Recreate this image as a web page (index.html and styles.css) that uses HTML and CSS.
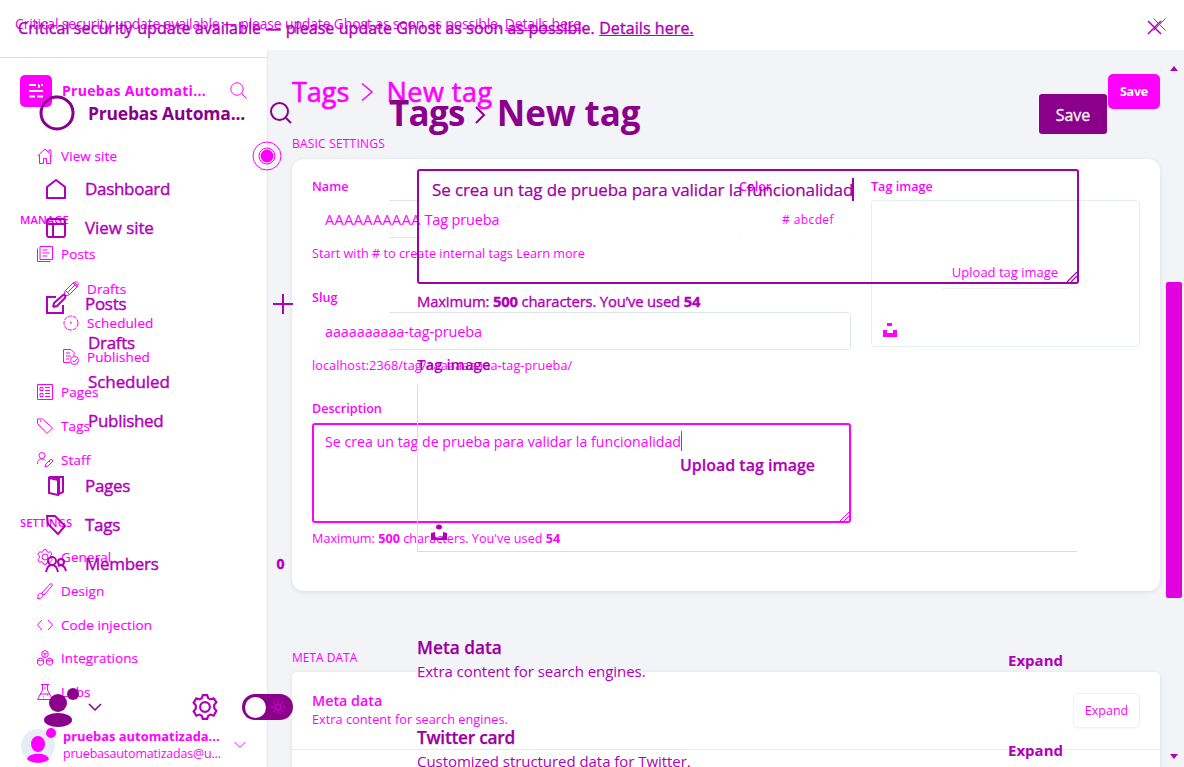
FILE: index.html
```html
<!DOCTYPE html>
<html lang="en">
<head>
<meta charset="utf-8">
<title>New tag - Ghost</title>
<link rel="stylesheet" href="styles.css">
</head>
<body>
<div class="stage">
<section class="layer small">
  <header class="banner"><p><span class="alert">Critical security update available — please update Ghost as soon as possible. <u>Details here</u>.</span></p>
    <svg class="close" width="13" height="13" viewBox="0 0 13 13"><path d="M.5.5l12 12M12.5.5l-12 12"/></svg></header>
  <div class="body">
    <nav class="sidebar">
      <div class="brand"><span class="logo"><svg width="16" height="16" viewBox="0 0 16 16"><path d="M1 2h7M10 2h1M13 2h2M1 8h14M1 13.500h6M9 13.500h6M11 2v3" stroke-width="2"/></svg></span><b class="sitename">Pruebas Automati...</b>
        <svg class="find" width="17" height="17" viewBox="0 0 17 17"><circle cx="7" cy="7" r="6.2"/><path d="M11.5 11.5l5 5"/></svg></div>
      <a class="item view"><svg viewBox="0 0 16 16"><path d="M.5 8L8 1l7.500 7M2.500 7v8.500h4v-5h3v5h4V7M12 4V2h2v4"/></svg><span>View site</span><svg class="radar" width="30" height="30" viewBox="0 0 30 30"><circle cx="15" cy="15" r="14"/><circle cx="15" cy="15" r="8"/><circle class="solid" cx="15" cy="15" r="6.500"/></svg></a>
      <div class="group"><span class="manage">MANAGE</span></div>
      <a class="item posts-item"><svg viewBox="0 0 16 16"><path d="M3 .5h12.500v13H3zM.500 2.500v13h13M5.500 4h5M5.500 7h7M5.500 10h5"/></svg><span>Posts</span></a>
      <a class="item sub gap1"><svg viewBox="0 0 16 16"><path d="M1 15l1-5 9-9 4 4-9 9-5 1M10 2l4 4M3 10l3 3M4 12l8-8M12 1c2-1 4 1 3 3"/></svg><span>Drafts</span></a>
      <a class="item sub"><svg viewBox="0 0 16 16"><circle cx="8" cy="8" r="7" stroke-dasharray="4 1"/><path d="M7 7h1v2"/></svg><span>Scheduled</span></a>
      <a class="item sub short"><svg viewBox="0 0 16 16"><path d="M7 13.500H.500V.500H8l3 3V7M3 4h4M3 7h5M3 10h3"/><circle cx="11.500" cy="11.500" r="4"/><path d="M9.500 12l1.500 1 3-3"/></svg><span>Published</span></a>
      <a class="item gap2"><svg viewBox="0 0 16 16"><path d="M.500.500h15v15H.500zM3 3.500h3v3H3zM3 9.500h3v3H3zM8 3.500h5M8 6.500h5M8 9.500h5M8 12.500h5"/></svg><span>Pages</span></a>
      <a class="item"><svg viewBox="0 0 16 16"><path d="M.500 1h5l10 9-5.500 5.500-9.500-10zM3 3h1v1"/></svg><span>Tags</span></a>
      <a class="item short"><svg viewBox="0 0 16 16"><circle cx="5" cy="3.500" r="3"/><path d="M.500 12c0-4 2-5 4.500-5 1.500 0 2.500.500 3.500 1.500M8 15l1-3 5-5 2 2-5 5zM12 9l1 1"/></svg><span>Staff</span></a>
      <div class="group"><span class="settings">SETTINGS</span></div>
      <a class="item"><svg viewBox="0 0 24 24"><use href="#gear"/></svg><span>General</span></a>
      <a class="item"><svg viewBox="0 0 16 16"><path d="M.500 15.500c1-2-.500-3 2-5 2-1 4 1 3 3-1 2-3 2-5 2M5 10l8-9c2-1 3 1 2 2l-8 9M4 10l3 2"/></svg><span>Design</span></a>
      <a class="item short"><svg viewBox="0 0 16 16"><path d="M5 3L.500 8 5 13M11 3l4.500 5-4.500 5"/></svg><span class="code">Code injection</span></a>
      <a class="item"><svg viewBox="0 0 16 16"><path d="M8 .500l3 1.500v4L8 8 5 6V2zM3.500 8l3 1.500v4l-3 2-3-2v-4zM12.500 8l3 1.500v4l-3 2-3-2v-4zM6 3l2 1 2-1M8 4v4M1 10l2.500 1L6 10M10 10l2.500 1 2.500-1"/></svg><span>Integrations</span></a>
      <a class="item short"><svg viewBox="0 0 16 16"><path d="M4 .500h8M5.500.500V6L.500 15.500h15L10.500 6V.500M3 10h10M7 4h2M6 13h1M10 11h1"/></svg><span>Labs</span></a>
      <div class="user"><svg width="36" height="36" viewBox="0 0 36 36"><circle class="pale" cx="17" cy="19" r="17"/><ellipse class="solid" cx="17" cy="17" rx="7" ry="8"/><path class="solid" d="M6 32c2-7 20-7 22 0-4 5-18 5-22 0"/><circle class="solid" cx="30" cy="6" r="5"/></svg>
        <div class="who"><b>pruebas automatizada...</b><span>pruebasautomatizadas@u...</span></div><svg class="chev" width="12" height="8" viewBox="0 0 12 8"><path d="M.500 1L6 6.500 11.500 1"/></svg></div>
    </nav>
    <main class="page">
      <div class="title"><h1><span>Tags</span><svg width="12" height="20" viewBox="0 0 12 20"><path d="M1 1.500l10 8.500-10 8.500" stroke-width="1.500"/></svg><span class="newtag-small">New tag</span></h1><button class="save">Save</button></div>
      <h2 class="section basic">BASIC SETTINGS</h2>
      <div class="card form">
        <div class="fields">
          <div class="row"><div class="name"><label>Name</label><div class="input partial"><span class="caps">AAAAAAAAAA</span> Tag prueba</div></div>
            <div class="color"><label>Color</label><div class="input corners"># abcdef</div></div></div>
          <p class="hint">Start with # to create internal tags Learn more</p>
          <label class="slug">Slug</label><div class="input sluginput">aaaaaaaaaa-tag-prueba</div>
          <p class="hint url">localhost:2368/tag/aaaaaaaaaa-tag-prueba/</p>
          <label class="desc">Description</label>
          <div class="area"><span class="entry">Se crea un tag de prueba para validar la funcionalidad</span><i></i><svg class="grip" width="9" height="9" viewBox="0 0 9 9"><path d="M0 9l9-9M4 9l5-5"/></svg></div>
          <p class="hint">Maximum: <b>500</b> characters. You've used <strong>54</strong></p>
        </div>
        <div class="image"><label>Tag image</label><div class="drop"><span class="upload">Upload tag image</span><svg width="14" height="15" viewBox="0 0 14 15"><path class="solid" d="M4 1h5v3H4zM0 8h4v3h6V8h4v7H0z"/></svg></div></div>
      </div>
      <h2 class="section meta">META DATA</h2>
      <div class="card metas"><div class="metarow"><div><h3>Meta data</h3><p>Extra content for search engines.</p></div><button class="expand">Expand</button></div></div>
    </main>
  </div>
</section>

<section class="layer large">
  <header class="banner"><p><span class="alert">Critical security update available — please update Ghost as soon as possible. <u>Details here.</u></span></p>
    <svg class="close" width="15" height="15" viewBox="0 0 15 15"><path d="M1 1l13 13M14 1L1 14"/></svg></header>
  <div class="body">
    <nav class="sidebar">
      <div class="brand"><svg width="36" height="36" viewBox="0 0 36 36"><circle cx="18" cy="18" r="16" stroke-width="3"/><path d="M9 4C17-1 29 3 33 11c3 8 0 16-6 20"/></svg><b>Pruebas Automa...</b><svg class="find" width="22" height="22" viewBox="0 0 22 22"><circle cx="9.500" cy="9.500" r="8.500"/><path d="M16 16l5 5"/></svg></div>
      <a class="item dash"><svg viewBox="0 0 20 20"><path d="M1 8l9-7 9 7v11H1z"/></svg><span>Dashboard</span></a>
      <a class="item"><svg viewBox="0 0 20 20"><rect x="1" y="1" width="18" height="18" rx="2"/><path d="M1 6h18M7 6v13"/></svg><span class="vs">View site</span></a>
      <a class="item posts"><svg viewBox="0 0 20 20"><path d="M10 3H1v16h16v-8M7 13l1-4 9-8c2-1 3 1 2 3l-8 8-4 1"/></svg><span>Posts</span><svg class="plus" viewBox="0 0 20 20"><path d="M10 0v20M0 10h20"/></svg></a>
      <a class="item sub"><span>Drafts</span></a>
      <a class="item sub"><span class="sch">Scheduled</span></a>
      <a class="item sub"><span>Published</span></a>
      <a class="item pages"><svg viewBox="0 0 20 20"><path d="M3 2l9 2v15l-9-2zM3 2l1-1h13v15l-4 2M8 1l5 2v15"/></svg><span>Pages</span></a>
      <a class="item"><svg viewBox="0 0 20 20"><path d="M1 1h8l10 10-7 8L2 9zM5 5l1 1"/></svg><span>Tags</span></a>
      <a class="item"><svg viewBox="0 0 20 20"><circle cx="6" cy="7" r="4"/><circle cx="15" cy="8" r="3"/><path d="M0 18c1-5 3-7 6-7s5 2 6 7M12 12c4-2 7 0 8 5"/></svg><span>Members</span><b class="count">0</b></a>
      <div class="tools"><svg class="person" width="40" height="40" viewBox="0 0 40 40"><circle class="solid" cx="16" cy="16" r="9"/><ellipse class="solid" cx="16" cy="33" rx="14" ry="7"/><circle class="solid" cx="31" cy="7" r="6"/></svg><svg class="chev" width="14" height="9" viewBox="0 0 14 9"><path d="M1 1l6 6 6-6"/></svg>
        <svg class="cog" width="26" height="26" viewBox="0 0 24 24"><g id="gear"><circle cx="12" cy="12" r="4.500"/><path d="M10 1h4l1 3 2 1 3-1 2.500 3.500-2 2.500v3l2 2.500L20 20l-3-1-2 1-1 3h-4l-1-3-2-1-3 1-2.500-4 2-2.500v-3L1.500 8 4 4l3 1 2-1z"/></g></svg>
        <span class="toggle"><i></i><svg width="14" height="14" viewBox="0 0 14 14"><circle cx="7" cy="7" r="3"/><path d="M7 0v14M0 7h14M2 2l10 10M12 2L2 12" stroke-dasharray="2 10 2 10"/></svg></span></div>
    </nav>
    <main class="page">
      <div class="title"><h1><span>Tags</span><svg width="10" height="18" viewBox="0 0 10 18"><path d="M1 1l8 8-8 8"/></svg><span class="newtag">New tag</span></h1><button class="save">Save</button></div>
      <div class="fields">
        <div class="area"><span class="entry">Se crea un tag de prueba para validar la funcionalidad</span><i></i><svg class="grip" width="10" height="10" viewBox="0 0 10 10"><path d="M0 10L10 0M4 10l6-6"/></svg></div>
        <p class="max">Maximum: <b>500</b> characters. You’ve used <b>54</b></p>
        <label><span>Tag image</span></label>
        <div class="drop"><span>Upload tag image</span><svg width="16" height="18" viewBox="0 0 16 18"><ellipse class="solid" cx="8" cy="3" rx="3" ry="2.500"/><path class="solid" d="M0 9l4-1v3q0 3 4 3t4-3V8l4 1v7H0z"/></svg></div>
        <div class="metarow"><div><h3>Meta data</h3><p class="extra">Extra content for search engines.</p></div><b>Expand</b></div>
        <div class="metarow"><div><h3 class="tw">Twitter card</h3><p class="custom">Customized structured data for Twitter.</p></div><b>Expand</b></div>
      </div>
    </main>
    <aside class="scroll"><span class="up"></span><span class="thumb"></span><span class="down"></span></aside>
  </div>
</section>
</div>
</body>
</html>
```

FILE: styles.css
```css
* { box-sizing: border-box; margin: 0; padding: 0; }
body { width: 1184px; height: 767px; overflow: hidden; background: #fff; font-family: "Open Sans", sans-serif; }
.stage { display: grid; height: 767px; overflow: hidden; }
.layer { grid-area: 1 / 1; width: 1184px; height: 767px; overflow: hidden; white-space: nowrap; }
.small { color: #f0f; background: #fff; font-size: 13px; }
.large { z-index: 2; color: #b000b8; font-size: 17px; }
svg { flex: none; fill: none; stroke: currentColor; stroke-width: 1; overflow: visible; }
.solid { fill: currentColor; stroke: none; }
h1, h2, h3, button { font-family: inherit; font-weight: normal; }
h1, .brand, .item, .user, .tools, .title, .body, .metarow { display: flex; align-items: center; }
.body { align-items: stretch; height: 717px; }
.banner { display: flex; justify-content: space-between; height: 50px; }

/* Compact layout */
.small .banner { padding: 14px 18px 0 15px; line-height: 20px; font-size: 14px; color: #e800f0; }
.small .alert { letter-spacing: -.17px; }
.small .close { margin-top: 4px; }
.small .sidebar { position: relative; z-index: 1; width: 268px; padding-top: 7px; border-right: 1px solid #e4e7eb; background: #fff; }
.small .brand { height: 66px; border-top: 1px solid #dcdfe1; padding-left: 20px; }
.logo { display: grid; place-items: center; width: 32px; height: 32px; border-radius: 5px; background: #f0f; color: #fff; }
.small .brand b { margin-left: 10px; width: 168px; font-size: 14px; letter-spacing: .28px; }
.small .item { height: 34px; padding-left: 37px; font-size: 13.500px; letter-spacing: .1px; -webkit-text-stroke: .15px currentColor; }
.small .item > svg:first-child { width: 16px; height: 16px; margin-right: 8px; }
.small .item > svg[viewBox="0 0 24 24"] { stroke-width: 1.500; }
.small .item.view { margin: 16px 0 30px; }
.small .radar { margin-left: auto; margin-right: -15px; }
.small .group { height: 34px; line-height: 34px; padding-left: 20px; font-size: 11.250px; font-weight: 600; letter-spacing: .05px; }
.small .sub { padding-left: 63px; }
.gap1 { margin-top: 1px; }
.gap2 { margin-top: 2px; }
.small .short { height: 33px; }
.small .short + .group { margin-top: 30px; }
.user { margin-top: 15px; height: 44px; padding-left: 21px; }
.pale { fill: #e6eef5; stroke: none; }
.who { margin-left: 6px; width: 171px; font-size: 12.500px; line-height: 18px; }
.who b, .who span { display: block; }
.who b { font-size: 12.900px; }
.who span { letter-spacing: -.2px; }
.small .page { width: 898px; padding-left: 24px; background: #f2f4f8; flex: 1; }
.small .title { height: 67px; padding-top: 17px; width: 868px; justify-content: space-between; align-items: flex-start; }
.small h1 { font-size: 27px; line-height: 50px; height: 50px; -webkit-text-stroke: .6px currentColor; }
.small h1 svg { margin: 0 13px 0 12px; }
.newtag-small { letter-spacing: .5px; }
.save { border: 0; color: #fff; font-weight: 600; }
.small .save { width: 52px; height: 35px; margin-top: 7px; border-radius: 5px; background: #f0f; font-size: 12.500px; font-weight: 700; letter-spacing: -.2px; line-height: 36px; }
.section { font-size: 12px; line-height: 18px; }
.small .basic { margin-top: 18px; letter-spacing: .2px; }
.card { width: 868px; background: #fff; border-radius: 12px; box-shadow: 0 1px 4px #0000001a; }
.form { display: flex; gap: 20px; height: 432px; margin-top: 6px; padding: 18px 20px; }
.small .fields { width: 539px; }
.small label { display: block; font-weight: 600; font-size: 12.600px; line-height: 20px; }
.row { display: flex; gap: 7px; }
.name { width: 420px; }
.color { width: 112px; }
.input { height: 38px; margin-top: 3px; padding-left: 13px; line-height: 39px; font-size: 14.500px; border-radius: 4px; }
.caps { letter-spacing: .42px; }
.partial { letter-spacing: -.15px; background: linear-gradient(#dce6ec, #dce6ec) 77px 0 / 28px 1px no-repeat, linear-gradient(#dce6ec, #dce6ec) 77px 100% / 28px 1px no-repeat; }
.corners { font-size: 12px; padding-left: 43px; letter-spacing: .4px; background: linear-gradient(#eceff2, #eceff2) 0 1px / 2px 1px no-repeat, linear-gradient(#eceff2, #eceff2) 100% 1px / 2px 1px no-repeat, linear-gradient(#eceff2, #eceff2) 0 36px / 2px 1px no-repeat, linear-gradient(#eceff2, #eceff2) 100% 36px / 2px 1px no-repeat; }
.sluginput { margin-top: 4px; line-height: 39px; letter-spacing: -.13px; background: linear-gradient(#dce6ec, #dce6ec) 77px 0 / 500px 1px no-repeat, linear-gradient(#dce6ec, #dce6ec) 77px 100% / 500px 1px no-repeat; border-right: 1px solid #dce6ec; }
.hint { height: 20px; line-height: 18px; margin-top: 6px; font-size: 12.680px; }
.url { letter-spacing: .07px; }
.slug { margin-top: 24px; }
.desc { margin-top: 23px; }
.area { display: flex; align-items: flex-start; position: relative; border: 2px solid; border-radius: 3px; }
.small .area { height: 100px; margin-top: 4px; padding: 6px 11px; font-size: 14.200px; line-height: 21px; }
.area i { width: 1px; height: 20px; background: currentColor; }
.grip { position: absolute; right: 0; bottom: 0; }
.image { width: 269px; }
.small .drop { display: flex; flex-direction: column; align-items: flex-start; height: 147px; margin-top: 3px; padding: 54px 12px 9px 11px; border: 1px solid #e6eef3; border-radius: 4px; }
.upload { width: 130px; height: 34px; margin-left: 57px; line-height: 34px; text-align: center; border-bottom: 1px solid #eef1f4; border-radius: 4px; }
.small .drop svg { margin-top: auto; }
.small .meta { margin-top: 58px; letter-spacing: 0; }
.metas { height: 120px; margin-top: 5px; border-radius: 5px; }
.small .metarow { height: 78px; padding: 0 20px; justify-content: space-between; border-bottom: 1px solid #e5edf2; }
.small h3 { margin-top: -1px; font-size: 14.300px; font-weight: 600; line-height: 19px; }
.small .metarow p { font-size: 12.780px; line-height: 19px; }
.expand { width: 67px; height: 35px; margin-top: -1px; border: 1px solid #eef1f4; border-radius: 5px; background: #fff; color: #f0f; font-size: 12.500px; box-shadow: 0 1px 2px #00000008; }

/* Enlarged layout */
.large .banner { padding: 18px 22px 0 18px; line-height: 20px; font-size: 16px; letter-spacing: .08px; -webkit-text-stroke: .4px currentColor; }
.large .close { margin-top: 2px; stroke-width: 1.500; }
.large svg { stroke-width: 2; }
.large .sidebar { width: 389px; padding-top: 43px; }
.large .brand { height: 40px; padding-left: 39px; color: #8b008b; }
.large .brand b { width: 182px; margin-left: 13px; font-size: 17.500px; letter-spacing: -.2px; }
.large .item { height: 39px; padding-left: 46px; font-size: 17px; letter-spacing: -.3px; -webkit-text-stroke: .4px currentColor; }
.large .item > svg:first-child { width: 20px; height: 20px; margin-right: 19px; }
.large .item.dash { margin-top: 36px; }
.large .item.posts { margin-top: 37px; }
.large .item.sub { padding-left: 88px; }
.large .item .vs, .large .item .sch { letter-spacing: -.08px; }
.large .item.pages { margin-top: 26px; }
.large .plus { width: 20px; height: 20px; margin-left: 147px; }
.count { margin-left: 118px; font-size: 14px; }
.tools { height: 40px; margin-top: 104px; padding-left: 42px; color: #8b008b; }
.large .tools .chev { margin-left: 6px; stroke-width: 1.500; }
.tools .cog { margin-left: 90px; color: #b000b8; }
.toggle { display: flex; align-items: center; justify-content: space-between; width: 51px; height: 26px; margin-left: 24px; padding: 2px 8px 2px 3px; border-radius: 13px; background: #8b008b; color: #c800c8; }
.toggle i { width: 21px; height: 21px; border-radius: 50%; background: #fff; }
.large .toggle svg { stroke-width: 1.500; }
.large .page { width: 777px; padding-top: 39px; }
.large .title { width: 718px; height: 50px; justify-content: space-between; color: #8b008b; }
.large h1 { margin-top: -2px; font-size: 35px; font-weight: 700; line-height: 48px; letter-spacing: -.7px; }
.large .newtag { letter-spacing: -.1px; }
.large h1 svg { margin: 4px 12px 0 10px; }
.large .save { width: 68px; height: 40px; border-radius: 3px; background: #8b008b; font-size: 16px; font-weight: 400; line-height: 42px; color: #eee; -webkit-text-stroke: .4px currentColor; }
.large .fields { width: 662px; margin: 30px 0 0 28px; }
.large .area { height: 115px; padding: 7px 13px; font-size: 17px; line-height: 24px; letter-spacing: -.1px; color: #a000a8; -webkit-text-stroke: .25px currentColor; }
.large .area i { height: 23px; width: 2px; margin-left: -1px; }
.large .grip { stroke-width: 1.200; }
.large .max { height: 24px; margin-top: 5px; line-height: 24px; font-size: 14.800px; letter-spacing: -.15px; -webkit-text-stroke: .35px currentColor; }
.large label { display: block; margin-top: 40px; height: 22px; line-height: 22px; font-size: 15px; font-weight: 600; }
.large .drop { display: flex; flex-direction: column; align-items: center; width: 660px; height: 167px; margin-top: 10px; padding: 68px 0 9px; border-left: 1px solid #ddd; border-bottom: 1px solid #ddd; font-size: 16px; font-weight: 600; line-height: 24px; -webkit-text-stroke: .2px currentColor; }
.large .drop svg { align-self: flex-start; margin: auto 0 0 13px; }
.large .metarow { justify-content: space-between; width: 646px; height: 90px; }
.large .drop + .metarow { margin-top: 62px; }
.large .metarow b { margin-top: 2px; font-size: 15px; }
.large h3 { font-size: 17.300px; font-weight: 600; line-height: 24px; color: #9a00a2; -webkit-text-stroke: .25px currentColor; }
.large .tw { letter-spacing: -.25px; }
.large .metarow p { margin-top: -1px; font-size: 15px; line-height: 24px; letter-spacing: -.05px; }
.scroll { display: flex; flex-direction: column; align-items: center; width: 18px; height: 717px; padding: 16px 2px 0 0; background: #f2f4f8; }
.up, .down { border-left: 4px solid transparent; border-right: 4px solid transparent; }
.up { border-bottom: 5px solid #b000b8; }
.down { border-top: 5px solid #b000b8; margin-top: 156px; }
.thumb { width: 16px; height: 316px; margin-top: 211px; background: #e000e0; border-radius: 2px; }
```
